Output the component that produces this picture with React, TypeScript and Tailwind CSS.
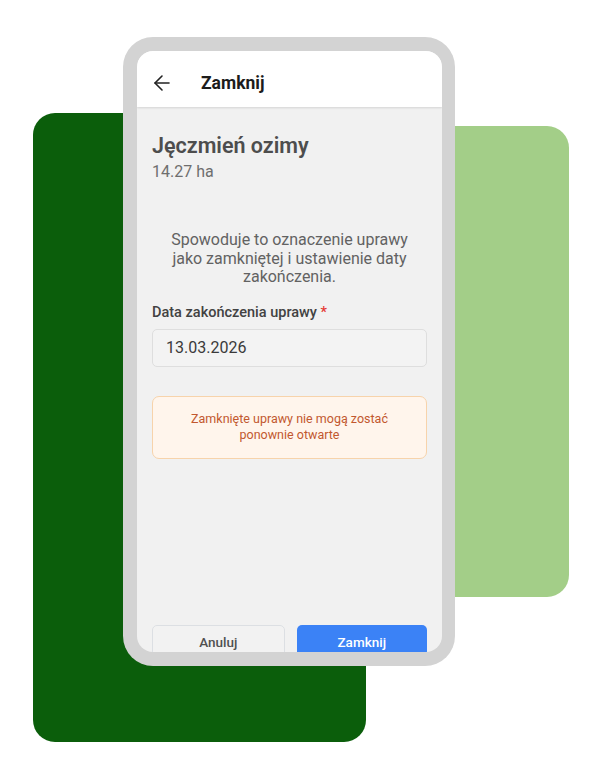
import { ArrowLeft } from "lucide-react"

const CloseCropScreen = () => {
  return (
    <div className="w-[305px] h-full rounded-[16px] overflow-hidden bg-[#f1f1f1] flex flex-col">
      <div className="h-[56px] shrink-0 bg-white flex items-center pt-[8px] pl-[13px] gap-[27px] shadow-[0_1px_2px_rgba(0,0,0,0.12)] relative z-10">
        <ArrowLeft size={24} strokeWidth={1.6} color="#222" />
        <h1 className="text-[17.5px] font-bold text-[#1c1c1c]">Zamknij</h1>
      </div>
      <div className="flex-1 flex flex-col px-[15px] pt-[26px]">
        <h2 className="text-[21.5px] leading-[26px] font-semibold text-[#4d4d4d]">Jęczmień ozimy</h2>
        <p className="text-[16px] leading-[20px] text-[#6e6e6e] mt-[3px]">14.27 ha</p>
        <p className="mt-[49px] px-[10px] text-center text-[16px] leading-[18.5px] text-[#626262]">
          Spowoduje to oznaczenie uprawy jako zamkniętej i ustawienie daty zakończenia.
        </p>
        <label className="mt-[16px] text-[14.5px] leading-[20px] font-medium text-[#424242]">
          Data zakończenia uprawy <span className="text-[#e53935]">*</span>
        </label>
        <div className="mt-[6px] h-[38px] rounded-[5px] border border-[#dedede] bg-[#f3f3f3] flex items-center px-[13px] text-[16px] text-[#3a3a3a]">
          13.03.2026
        </div>
        <div className="mt-[29px] h-[63px] rounded-[7px] border border-[#f7d3ab] bg-[#fff5ec] flex items-center justify-center px-[20px] text-center text-[12.5px] leading-[16px] text-[#c2582f]">
          Zamknięte uprawy nie mogą zostać ponownie otwarte
        </div>
        <div className="mt-auto mb-[-8px] flex gap-[12px]">
          <button className="flex-1 h-[35px] rounded-[5px] border border-[#dcdfe3] bg-[#f2f2f2] text-[13.5px] font-medium text-[#505050]">
            Anuluj
          </button>
          <button className="flex-1 h-[35px] rounded-[5px] bg-[#3b82f6] text-[13.5px] font-medium text-white">
            Zamknij
          </button>
        </div>
      </div>
    </div>
  )
}

export default function App() {
  return (
    <div
      className="relative w-[600px] h-[760px] bg-white overflow-hidden"
      style={{ fontFamily: "Roboto, 'Noto Sans', sans-serif" }}
    >
      <div className="absolute left-[33px] top-[113px] w-[333px] h-[629px] rounded-[22px] bg-[#0b5e0b]" />
      <div className="absolute left-[300px] top-[126px] w-[269px] h-[471px] rounded-[22px] bg-[#a3ce88]" />
      <div className="relative pl-[123px] pt-[37px]">
        <div className="w-[332px] h-[629px] rounded-[30px] bg-[#d3d3d3] p-[14px]">
          <CloseCropScreen />
        </div>
      </div>
    </div>
  )
}
